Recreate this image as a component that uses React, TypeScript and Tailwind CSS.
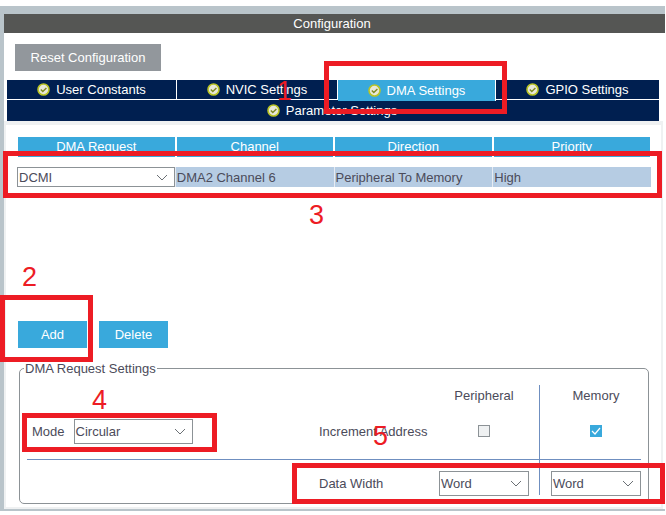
import React from 'react';

const ChevronDown = () => (
  <svg width="12" height="7" viewBox="0 0 12 7" fill="none" className="shrink-0">
    <path d="M1 1l5 5 5-5" stroke="#6b7075" strokeWidth="1" />
  </svg>
);

const TabCheck = () => (
  <svg width="13" height="13" viewBox="0 0 13 13" className="shrink-0">
    <circle cx="6.5" cy="6.5" r="5.5" fill="#e8e8d8" stroke="#b9c424" strokeWidth="1.6" />
    <path d="M3.8 6.6l2 2 3.6-3.6" fill="none" stroke="#7f8a20" strokeWidth="1.4" />
  </svg>
);

function Select({ value, className }: { value: string; className: string }) {
  return (
    <div className={`flex items-center justify-between border border-[#8c9296] bg-white pl-[1px] pr-[6px] ${className}`}>
      <span>{value}</span>
      <ChevronDown />
    </div>
  );
}

function Tab({ label, active, className }: { label: string; active?: boolean; className: string }) {
  return (
    <div className={`flex items-center justify-center gap-[6px] text-white ${active ? 'bg-[#39a9dc] h-[21px]' : 'h-[19px]'} ${className}`}>
      <TabCheck />
      <span>{label}</span>
    </div>
  );
}

function HeadCell({ label }: { label: string }) {
  return <div className="flex h-[20px] items-center justify-center bg-[#39a9dc] pb-[2px] text-white">{label}</div>;
}

function RedBox({ className }: { className: string }) {
  return <div className={`absolute border-[5px] border-[#ed1c24] ${className}`} />;
}

function Digit({ value, className }: { value: string; className: string }) {
  return <div className={`absolute text-[27px] leading-none text-[#ed1c24] ${className}`}>{value}</div>;
}

export default function App() {
  return (
    <div className="relative h-[515px] w-[666px] overflow-hidden bg-white text-[13px] leading-none text-[#4b4b5a] [font-family:'Liberation_Sans',Arial,sans-serif]">
      <div className="h-[6px]" />
      <div className="h-[505px] w-[665px] bg-[#b9c4ca] pl-[4px] pt-[8px]">
        <div className="flex h-[19px] items-center justify-center bg-[#555654] pr-[5px] text-white">Configuration</div>
        <div className="h-[476px] bg-white">
          <div className="px-[11px] pt-[11px]">
            <div className="flex h-[27px] w-[146px] items-center justify-center bg-[#92979c] text-white">Reset Configuration</div>
          </div>
          <div className="ml-[3px] mt-[9px] w-[652px] bg-[#001f50]">
            <div className="flex h-[20px] items-start border-b border-white">
              <Tab label="User Constants" className="w-[170px] border-r border-white" />
              <Tab label="NVIC Settings" className="w-[161px] border-r border-white" />
              <Tab label="DMA Settings" active className="w-[158px] border-r border-white" />
              <Tab label="GPIO Settings" className="flex-1" />
            </div>
            <div className="flex h-[21px] items-center justify-center gap-[6px] pr-[2px] text-white">
              <TabCheck />
              <span>Parameter Settings</span>
            </div>
          </div>

          <div className="mr-[2px] h-[388px] border-x-2 border-b-2 border-t-4 border-[#eff1f2] pl-[11px] pt-[12px]">
            <div className="ml-[1px] grid w-[632px] grid-cols-4 gap-x-[2px]">
              <HeadCell label="DMA Request" />
              <HeadCell label="Channel" />
              <HeadCell label="Direction" />
              <HeadCell label="Priority" />
            </div>
            <div className="mt-[10px] grid h-[20px] w-[634px] grid-cols-4 items-stretch gap-x-[1px] bg-[#e6ebf2]">
              <Select value="DCMI" className="" />
              <div className="flex items-center bg-[#b6cce3] pl-[1px]">DMA2 Channel 6</div>
              <div className="flex items-center bg-[#b6cce3] pl-[1px]">Peripheral To Memory</div>
              <div className="flex items-center bg-[#b6cce3] pl-[1px]">High</div>
            </div>

            <div className="ml-[1px] mt-[134px] flex gap-[12px]">
              <div className="flex h-[27px] w-[69px] items-center justify-center bg-[#39a9dc] text-white">Add</div>
              <div className="flex h-[27px] w-[69px] items-center justify-center bg-[#39a9dc] text-white">Delete</div>
            </div>

            <fieldset className="ml-[2px] mt-[12px] h-[144px] w-[630px] rounded-[5px] border border-[#8c9296] px-[7px]">
              <legend className="ml-[-3px] px-[1px] pt-px leading-[16px]">DMA Request Settings</legend>
              <div className="mt-[8px] grid grid-cols-[292px_120px_100px_102px] grid-rows-[75px_35px]">
                <div className="flex items-start border-b border-[#6f8fc0] pl-[5px] pt-[34px]">
                  <span className="mr-[9px] flex h-[25px] items-center">Mode</span>
                  <Select value="Circular" className="h-[25px] w-[119px]" />
                </div>
                <div className="border-b border-[#6f8fc0] pt-[34px]">
                  <div className="flex h-[25px] items-center whitespace-nowrap">Increment Address</div>
                </div>
                <div className="flex flex-col items-center border-b border-[#6f8fc0] pr-[10px] pt-[4px]">
                  <span>Peripheral</span>
                  <span className="mt-[23px] block h-[12px] w-[12px] border border-[#8c9296] bg-[#eff1f2]" />
                </div>
                <div className="flex flex-col items-center border-b border-l border-[#6f8fc0] pl-[11px] pt-[4px]">
                  <span>Memory</span>
                  <span className="mt-[23px] flex h-[12px] w-[12px] items-center justify-center bg-[#39a9dc]">
                    <svg width="10" height="8" viewBox="0 0 10 8" fill="none"><path d="M1 4l3 3 5-6" stroke="#fff" strokeWidth="1.2" /></svg>
                  </span>
                </div>
                <div className="col-span-2 flex items-start justify-end pt-[11px]">
                  <span className="flex h-[25px] w-[120px] items-center">Data Width</span>
                </div>
                <div className="pt-[11px]">
                  <Select value="Word" className="h-[25px] w-[90px]" />
                </div>
                <div className="border-l border-[#6f8fc0] pl-[11px] pt-[11px]">
                  <Select value="Word" className="h-[25px] w-[90px]" />
                </div>
              </div>
            </fieldset>
          </div>
        </div>
      </div>

      <RedBox className="left-[324px] top-[61px] h-[53px] w-[183px]" />
      <RedBox className="left-[3px] top-[151px] h-[47px] w-[659px]" />
      <RedBox className="left-[0px] top-[295px] h-[67px] w-[93px]" />
      <RedBox className="left-[22px] top-[413px] h-[39px] w-[195px]" />
      <RedBox className="left-[292px] top-[463px] h-[41px] w-[373px]" />
      <Digit value="1" className="left-[277px] top-[78px]" />
      <Digit value="2" className="left-[22px] top-[264px]" />
      <Digit value="3" className="left-[309px] top-[202px]" />
      <Digit value="4" className="left-[92px] top-[387px]" />
      <Digit value="5" className="left-[373px] top-[423px]" />
    </div>
  );
}
